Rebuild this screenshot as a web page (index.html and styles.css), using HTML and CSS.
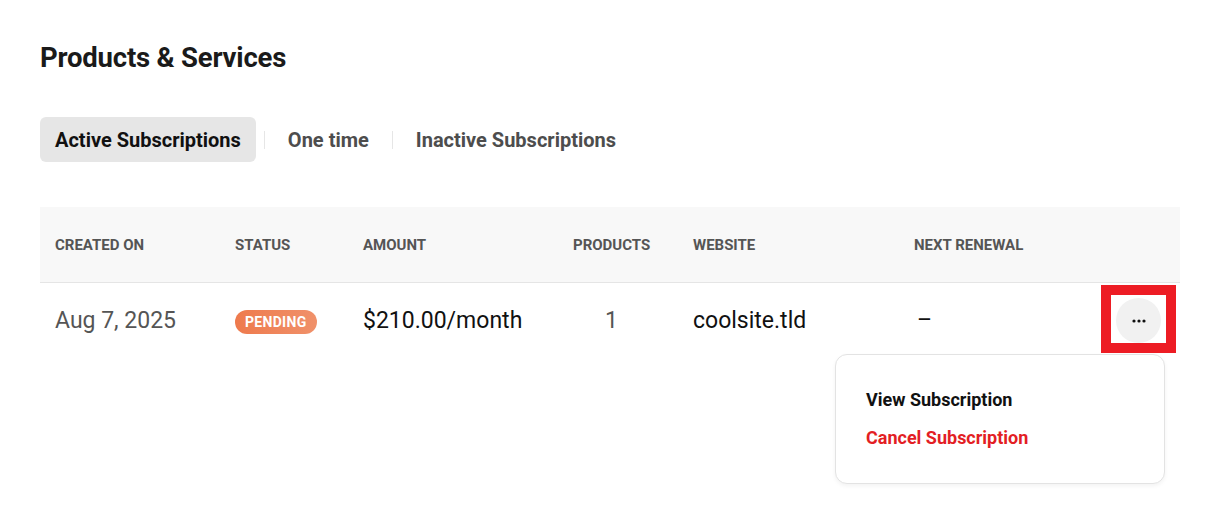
FILE: index.html
```html
<!DOCTYPE html>
<html lang="en">
<head>
<meta charset="utf-8">
<title>Products &amp; Services</title>
<link rel="stylesheet" href="styles.css">
</head>
<body>
<main class="page">
  <h1 class="title">Products &amp; Services</h1>
  <nav class="tabs">
    <button class="tab tab-active">Active Subscriptions</button>
    <span class="tab-sep"></span>
    <button class="tab">One time</button>
    <span class="tab-sep"></span>
    <button class="tab">Inactive Subscriptions</button>
  </nav>
  <div class="table">
    <div class="row head">
      <div class="cell c-date">Created On</div>
      <div class="cell c-status">Status</div>
      <div class="cell c-amount">Amount</div>
      <div class="cell c-products">Products</div>
      <div class="cell c-site">Website</div>
      <div class="cell c-renew">Next Renewal</div>
      <div class="cell c-action"></div>
    </div>
    <div class="row body">
      <div class="cell c-date muted">Aug 7, 2025</div>
      <div class="cell c-status"><span class="badge">Pending</span></div>
      <div class="cell c-amount">$210.00/month</div>
      <div class="cell c-products muted">1</div>
      <div class="cell c-site">coolsite.tld</div>
      <div class="cell c-renew">–</div>
      <div class="cell c-action">
        <button class="more" aria-label="More actions">
          <svg width="14" height="4" viewBox="0 0 14 4"><circle cx="2" cy="2" r="1.6" fill="#111"/><circle cx="7" cy="2" r="1.6" fill="#111"/><circle cx="12" cy="2" r="1.6" fill="#111"/></svg>
        </button>
        <span class="highlight"></span>
        <div class="menu">
          <a class="menu-item">View Subscription</a>
          <a class="menu-item danger">Cancel Subscription</a>
        </div>
      </div>
    </div>
  </div>
</main>
</body>
</html>
```
FILE: styles.css
```css
* { box-sizing: border-box; }
html, body { margin: 0; padding: 0; background: #fff; }
body { font-family: Roboto, "Liberation Sans", Arial, sans-serif; color: #111; }
.page { padding: 43px 40px 0 40px; min-height: 530px; }
.title { margin: 0; font-size: 27.5px; line-height: 30px; font-weight: 700; color: #1a1a1a; letter-spacing: -0.2px; }
.tabs { display: flex; align-items: center; margin-top: 44px; }
.tab { font-family: inherit; border: 0; background: transparent; height: 45px; padding: 0 15px; font-size: 20px; font-weight: 700; color: #4d4d4d; border-radius: 6px; cursor: pointer; }
.tab-active { background: #e6e6e6; color: #111; }
.tab-sep { width: 1px; height: 18px; background: #e6e6e6; margin: 0 8px; }
.table { margin-top: 45px; width: 1140px; }
.row { display: grid; grid-template-columns: 180px 128px 210px 120px 221px 202px 79px; align-items: center; }
.head { background: #f8f8f8; height: 76px; border-bottom: 1px solid #e5e5e5; }
.head .cell { font-size: 15px; font-weight: 700; text-transform: uppercase; color: #555; }
.body { height: 75px; font-size: 23px; color: #111; }
.cell { padding-left: 15px; }
.c-renew { padding-left: 18px; }
.c-products { text-align: center; padding-left: 15px; padding-right: 28px; }
.muted { color: #555; }
.badge { display: inline-block; height: 24px; line-height: 24px; padding: 0 10px; border-radius: 12px; background: linear-gradient(90deg, #ee7a4d, #f0916a); color: #fff; font-size: 14px; font-weight: 700; text-transform: uppercase; letter-spacing: 0.3px; vertical-align: middle; }
.head .c-renew { padding-left: 15px; }
.c-action { position: relative; height: 100%; display: flex; align-items: center; }
.more { width: 45px; height: 45px; border-radius: 50%; border: 0; background: #f1f1f1; display: flex; align-items: center; justify-content: center; padding: 0; cursor: pointer; }
.highlight { position: absolute; left: 0; top: 2px; width: 75px; height: 68px; border: 10px solid #ed1c24; pointer-events: none; }
.menu { position: absolute; right: 15px; top: 71px; width: 330px; background: #fff; border: 1px solid #e3e3e3; border-radius: 12px; box-shadow: 0 2px 4px rgba(0,0,0,0.05); padding: 33px 30px; display: flex; flex-direction: column; gap: 14px; z-index: 2; }
.menu-item { font-size: 18px; line-height: 24px; font-weight: 700; color: #111; cursor: pointer; }
.menu-item.danger { color: #e31e24; }
```
